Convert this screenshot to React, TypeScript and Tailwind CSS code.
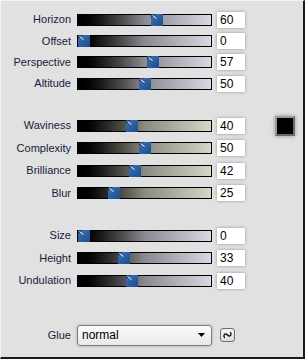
import React from 'react';

type Row = { label: string; value: number };

const group1: Row[] = [
    { label: 'Horizon', value: 60 },
    { label: 'Offset', value: 0 },
    { label: 'Perspective', value: 57 },
    { label: 'Altitude', value: 50 },
];

const group2: Row[] = [
    { label: 'Waviness', value: 40 },
    { label: 'Complexity', value: 50 },
    { label: 'Brilliance', value: 42 },
    { label: 'Blur', value: 25 },
];

const group3: Row[] = [
    { label: 'Size', value: 0 },
    { label: 'Height', value: 33 },
    { label: 'Undulation', value: 40 },
];

// 슬라이더 손잡이
function Thumb() {
    return (
        <svg width="12" height="12" viewBox="0 0 12 12" className="block">
            <defs>
                <linearGradient id="tg" x1="0" y1="0" x2="1" y2="1">
                    <stop offset="0" stopColor="#3b72b8" />
                    <stop offset="1" stopColor="#1d4c8a" />
                </linearGradient>
            </defs>
            <rect x="0" y="0" width="12" height="12" fill="url(#tg)" />
            <polygon points="0,0 5,0 0,4" fill="#2a3f5e" />
            <line x1="1.5" y1="1.5" x2="5.5" y2="4.5" stroke="#ffffff" strokeWidth="1" />
        </svg>
    );
}

function Slider({ value, tone }: { value: number; tone: 'cool' | 'warm' }) {
    const left = Math.round((value / 100) * 121) + 1;
    return (
        <div
            className={`relative w-[135px] h-[12px] border border-black ${
                tone === 'cool'
                    ? 'bg-gradient-to-r from-[#000000] via-[#8a8a90] to-[#d9d9e4]'
                    : 'bg-gradient-to-r from-[#000000] via-[#8b8b82] to-[#d6d6c6]'
            }`}
        >
            <div className="absolute top-[-1px]" style={{ left: `${left - 1}px` }}>
                <Thumb />
            </div>
        </div>
    );
}

function SliderRow({ row, tone, h, children }: { row: Row; tone: 'cool' | 'warm'; h: string; children?: React.ReactNode }) {
    return (
        <div className={`flex items-center ${h}`}>
            <div className="w-[70px] text-right text-[11px] text-[#161c3a] leading-none">{row.label}</div>
            <div className="ml-[6px]">
                <Slider value={row.value} tone={tone} />
            </div>
            <div className="ml-[5px] w-[28px] h-[16px] bg-white shadow-[0_0_3px_rgba(0,0,0,0.35)] pl-[3px] text-[12px] leading-[16px] text-black">
                {row.value}
            </div>
            {children}
        </div>
    );
}

export default function App() {
    return (
        <div
            className="w-[305px] h-[359px] bg-[#e1e1e1] border-t border-l border-t-[#f4f4f4] border-l-[#f4f4f4] border-r-2 border-b-2 border-r-[#1a1a1a] border-b-[#1a1a1a] flex flex-col"
            style={{ fontFamily: '"Liberation Sans", Arial, sans-serif' }}
        >
            {/* 1 그룹 */}
            <div className="mt-[8px] flex flex-col">
                {group1.map((r) => (
                    <SliderRow key={r.label} row={r} tone="cool" h="h-[21.4px]" />
                ))}
            </div>

            {/* 2 그룹 */}
            <div className="mt-[20px] flex flex-col">
                {group2.map((r, i) => (
                    <SliderRow key={r.label} row={r} tone="warm" h="h-[22.5px]">
                        {i === 0 && (
                            <div className="ml-[30px] w-[20px] h-[20px] bg-black border-2 border-t-[#9a9a9a] border-l-[#9a9a9a] border-r-[#6a6a6a] border-b-[#6a6a6a] shadow-[0_0_4px_rgba(0,0,0,0.35)]" />
                        )}
                    </SliderRow>
                ))}
            </div>

            {/* 3 그룹 */}
            <div className="mt-[20px] flex flex-col">
                {group3.map((r) => (
                    <SliderRow key={r.label} row={r} tone="cool" h="h-[22.5px]" />
                ))}
            </div>

            {/* Glue */}
            <div className="mt-[32px] flex items-center h-[22px]">
                <div className="w-[70px] text-right text-[11px] text-[#161c3a] leading-none">Glue</div>
                <div className="ml-[6px] w-[135px] h-[21px] rounded-[3px] border border-[#7c7c7c] bg-gradient-to-b from-[#fbfbfb] to-[#e9e9e9] shadow-[0_0_3px_rgba(0,0,0,0.25)] flex items-center pl-[4px] pr-[6px]">
                    <span className="flex-1 text-[12px] text-black leading-none">normal</span>
                    <svg width="7" height="4" viewBox="0 0 7 4">
                        <polygon points="0,0 7,0 3.5,4" fill="#000" />
                    </svg>
                </div>
                <div className="ml-[8px] w-[15px] h-[14px] rounded-[3px] border border-[#6e6e6e] bg-gradient-to-b from-[#f4f4f4] to-[#dcdcdc] flex items-center justify-center">
                    <svg width="9" height="8" viewBox="0 0 9 8">
                        <path d="M2 6.5 C0.5 6.5, 0.5 3, 2.5 3 C4.5 3, 4.5 5, 6.5 5 C8.5 5, 8.5 1.5, 7 1.5" fill="none" stroke="#111" strokeWidth="1.3" />
                    </svg>
                </div>
            </div>
        </div>
    );
}
